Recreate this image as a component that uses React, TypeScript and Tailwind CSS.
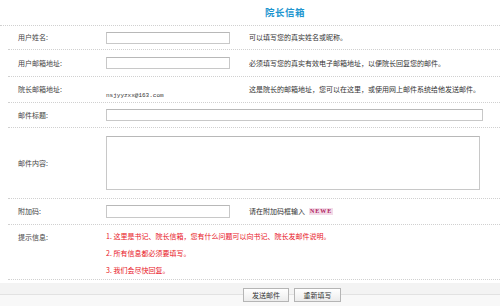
import React from "react";

const font = { fontFamily: '"Noto Sans CJK SC", "Liberation Sans", sans-serif' };

function Row({
  label,
  height,
  top = false,
  alignTop = false,
  children,
  hint,
}: {
  label: string;
  height: string;
  top?: boolean;
  alignTop?: boolean;
  children?: React.ReactNode;
  hint?: React.ReactNode;
}) {
  return (
    <div
      className={`ml-2 flex ${height} ${alignTop ? "items-start pt-[7px]" : "items-center"} border-b border-dotted border-[#d0d0d0]`}
    >
      <div className="w-[98px] shrink-0 pl-[10px] text-[7px] text-[#444]">{label}</div>
      <div className={hint ? "w-[143px] shrink-0" : "flex-1"}>{children}</div>
      {hint && <div className="text-[7px] text-[#333] whitespace-nowrap">{hint}</div>}
    </div>
  );
}

export default function App() {
  return (
    <div className="w-[500px] h-[307px] bg-white overflow-hidden" style={font}>
      {/* title */}
      <div className="h-[26px] border-b border-dotted border-[#d0d0d0] flex items-center pl-[265px]">
        <span className="text-[9.5px] font-bold text-[#1e96cf] tracking-[0.5px]">院长信箱</span>
      </div>

      <Row label="用户姓名:" height="h-[24px]" hint="可以填写您的真实姓名或昵称。">
        <div className="w-[124px] h-[12px] border border-[#c8c8c8] border-t-[#b8b8b8]" />
      </Row>
      <Row label="用户邮箱地址:" height="h-[27px]" hint="必须填写您的真实有效电子邮箱地址，以便院长回复您的邮件。">
        <div className="w-[124px] h-[12px] border border-[#c8c8c8] border-t-[#b8b8b8]" />
      </Row>
      <Row label="院长邮箱地址:" height="h-[26px]" hint="这是院长的邮箱地址，您可以在这里，或使用网上邮件系统给他发送邮件。">
        <span className="text-[6px] text-[#333]" style={{ fontFamily: '"Liberation Mono", monospace' }}>
          nsjyyzxx@163.com
        </span>
      </Row>
      <Row label="邮件标题:" height="h-[25px]">
        <div className="w-[377px] h-[12px] border border-[#c8c8c8] border-t-[#b8b8b8]" />
      </Row>
      <Row label="邮件内容:" height="h-[71px]">
        <div className="w-[374px] h-[54px] border border-[#c8c8c8] border-t-[#b8b8b8]" />
      </Row>
      <Row
        label="附加码:"
        height="h-[26px]"
        hint={
          <span className="flex items-center">
            请在附加码框输入
            <span
              className="ml-[4px] px-[1px] bg-[#f2dbe8] text-[#b0205c] text-[6px] font-bold tracking-[1px] leading-[7px]"
              style={{ fontFamily: '"Liberation Serif", serif' }}
            >
              NEWE
            </span>
          </span>
        }
      >
        <div className="w-[124px] h-[13px] border border-[#c8c8c8] border-t-[#b8b8b8]" />
      </Row>
      <Row label="提示信息:" height="h-[55px]" alignTop>
        <div className="flex flex-col gap-[8px] text-[7px] text-[#e8141e] leading-[9px]">
          <span>1. 这里是书记、院长信箱，您有什么问题可以向书记、院长发邮件说明。</span>
          <span>2. 所有信息都必须要填写。</span>
          <span>3. 我们会尽快回复。</span>
        </div>
      </Row>

      {/* button bar */}
      <div className="mt-[3px] h-[24px] relative">
        <div className="h-[12px] bg-[#f3f3f3] border-b border-[#e2e2e2]" />
        <div className="h-[11px] bg-[#f8f8f8]" />
        <div className="absolute inset-0 flex items-center pl-[243px] gap-[5px]">
          <button className="w-[46px] h-[14px] border border-[#b5b5b5] bg-gradient-to-b from-white to-[#ececec] text-[7px] text-[#333] leading-none">
            发送邮件
          </button>
          <button className="w-[47px] h-[14px] border border-[#b5b5b5] bg-gradient-to-b from-white to-[#ececec] text-[7px] text-[#333] leading-none">
            重新填写
          </button>
        </div>
      </div>
    </div>
  );
}
